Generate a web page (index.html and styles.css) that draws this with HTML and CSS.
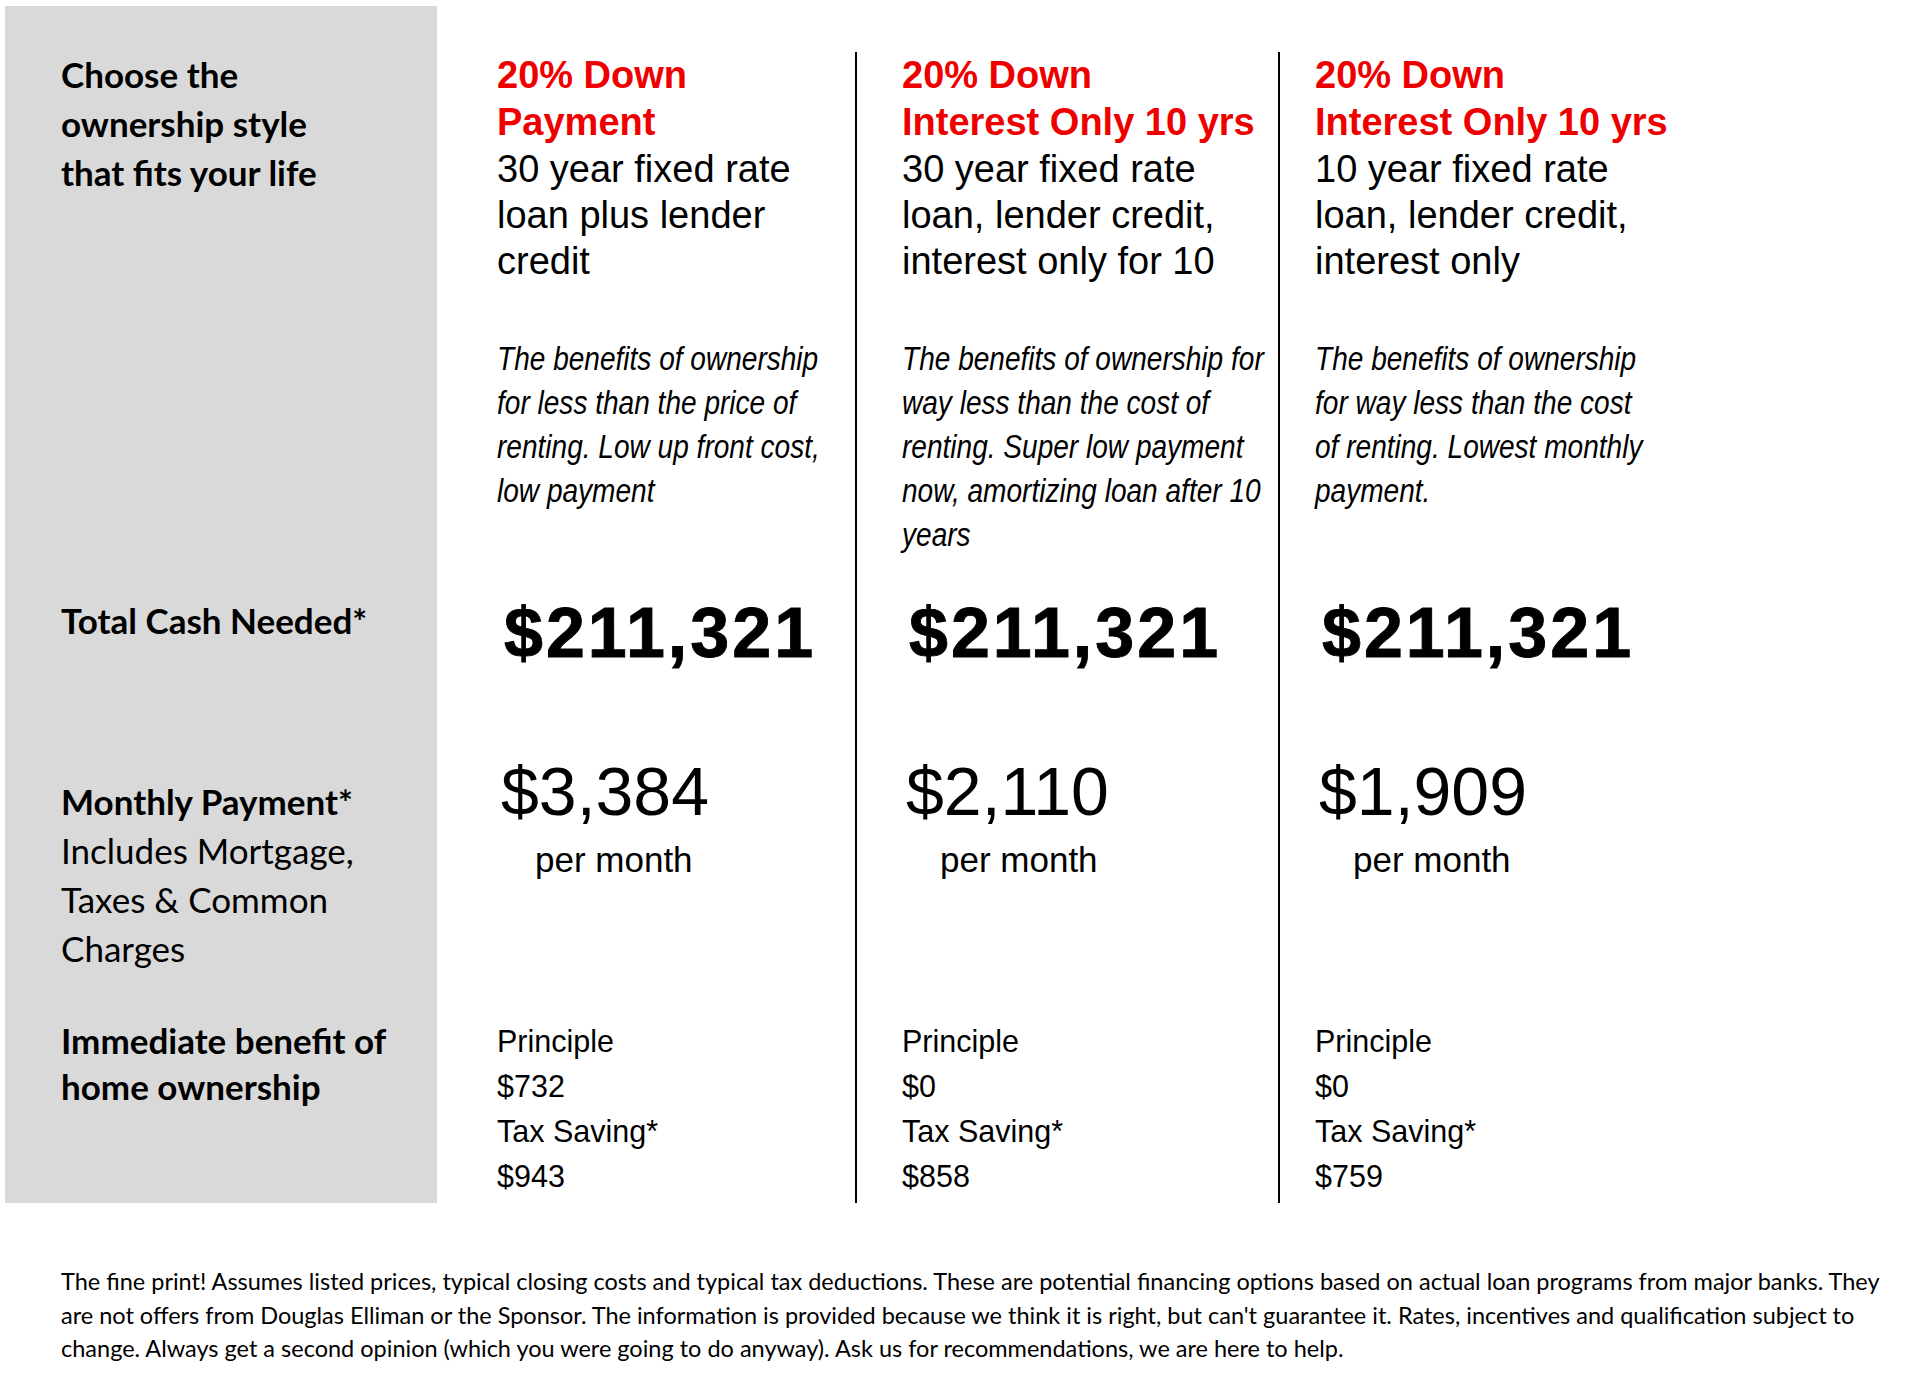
FILE: index.html
```html
<!DOCTYPE html>
<html lang="en">
<head>
<meta charset="utf-8">
<title>Ownership options</title>
<link rel="stylesheet" href="styles.css">
</head>
<body>
<div class="sheet">
  <div class="rule rule-a"></div>
  <div class="rule rule-b"></div>

  <div class="cell label c1 r1">Choose the<br>ownership style<br>that fits your life</div>
  <div class="cell c2 r1">
    <div class="plan-title">20% Down<br>Payment</div>
    <div class="plan-sub">30 year fixed rate<br>loan plus lender<br>credit</div>
    <div class="plan-desc">The benefits of ownership<br>for less than the price of<br>renting. Low up front cost,<br>low payment</div>
  </div>
  <div class="cell c3 r1">
    <div class="plan-title">20% Down<br>Interest Only 10 yrs</div>
    <div class="plan-sub">30 year fixed rate<br>loan, lender credit,<br>interest only for 10</div>
    <div class="plan-desc">The benefits of ownership for<br>way less than the cost of<br>renting. Super low payment<br>now, amortizing loan after 10<br>years</div>
  </div>
  <div class="cell c4 r1">
    <div class="plan-title">20% Down<br>Interest Only 10 yrs</div>
    <div class="plan-sub">10 year fixed rate<br>loan, lender credit,<br>interest only</div>
    <div class="plan-desc">The benefits of ownership<br>for way less than the cost<br>of renting. Lowest monthly<br>payment.</div>
  </div>

  <div class="cell label c1 r2">Total Cash Needed*</div>
  <div class="cell c2 r2"><div class="cash">$211,321</div></div>
  <div class="cell c3 r2"><div class="cash">$211,321</div></div>
  <div class="cell c4 r2"><div class="cash">$211,321</div></div>

  <div class="cell label c1 r3">Monthly Payment*<br><span class="note">Includes Mortgage,<br>Taxes &amp; Common<br>Charges</span></div>
  <div class="cell c2 r3"><div class="monthly">$3,384</div><div class="per">per month</div></div>
  <div class="cell c3 r3"><div class="monthly">$2,110</div><div class="per">per month</div></div>
  <div class="cell c4 r3"><div class="monthly">$1,909</div><div class="per">per month</div></div>

  <div class="cell label c1 r4">Immediate benefit of<br>home ownership</div>
  <div class="cell c2 r4"><div class="benefit">Principle<br>$732<br>Tax Saving*<br>$943</div></div>
  <div class="cell c3 r4"><div class="benefit">Principle<br>$0<br>Tax Saving*<br>$858</div></div>
  <div class="cell c4 r4"><div class="benefit">Principle<br>$0<br>Tax Saving*<br>$759</div></div>
</div>

<p class="fine-print">The fine print! Assumes listed prices, typical closing costs and typical tax deductions. These are potential financing options based on actual loan programs from major banks. They are not offers from Douglas Elliman or the Sponsor. The information is provided because we think it is right, but can't guarantee it. Rates, incentives and qualification subject to change. Always get a second opinion (which you were going to do anyway). Ask us for recommendations, we are here to help.</p>
</body>
</html>
```

FILE: styles.css
```css
html, body {
  margin: 0;
  padding: 0;
  background: #ffffff;
  color: #000000;
}

body {
  font-family: "Liberation Sans", Arial, sans-serif;
}

.sheet {
  display: grid;
  grid-template-columns: 432px 418px 423px 402px;
  grid-template-rows: 574px 160px 260px 203px;
  margin: 6px 0 0 5px;
}

.rule {
  grid-row: 1 / -1;
  justify-self: start;
  width: 2px;
  margin-top: 46px;
  background: #000;
  z-index: 1;
}
.rule-a { grid-column: 3; }
.rule-b { grid-column: 4; }

.cell { min-width: 0; }
.c1 { grid-column: 1; background: #d9d9d9; padding-left: 56px; }
.c2 { grid-column: 2; padding-left: 60px; }
.c3 { grid-column: 3; padding-left: 47px; }
.c4 { grid-column: 4; padding-left: 37px; }
.r1 { grid-row: 1; }
.r2 { grid-row: 2; }
.r3 { grid-row: 3; }
.r4 { grid-row: 4; }

.label {
  font-family: Lato, "Open Sans", sans-serif;
  font-weight: 700;
  font-size: 35px;
  line-height: 49px;
  white-space: nowrap;
}
.label.r1 { padding-top: 44px; }
.label.r2 { padding-top: 16px; }
.label.r3 { padding-top: 37px; }
.label.r4 { padding-top: 17px; line-height: 46px; }
.note { font-weight: 400; }

.plan-title {
  padding-top: 46px;
  color: #ee0000;
  font-weight: 700;
  font-size: 38px;
  line-height: 47px;
  white-space: nowrap;
}
.plan-sub {
  font-size: 38px;
  line-height: 46px;
  white-space: nowrap;
}
.plan-desc {
  margin-top: 53px;
  font-style: italic;
  font-size: 33px;
  line-height: 44px;
  white-space: nowrap;
  transform: scaleX(0.85);
  transform-origin: 0 0;
}

.cash {
  padding-top: 13px;
  margin-left: 7px;
  font-weight: 700;
  font-size: 70px;
  line-height: 80px;
  letter-spacing: 3px;
  -webkit-text-stroke: 0.9px #000;
}

.monthly {
  padding-top: 13px;
  margin-left: 4px;
  font-size: 68px;
  line-height: 76px;
}
.per {
  margin-top: 2px;
  margin-left: 38px;
  font-size: 35px;
  line-height: 57px;
}

.benefit {
  padding-top: 19px;
  font-size: 30.5px;
  line-height: 45px;
}

.fine-print {
  margin: 62px 0 0 61px;
  width: 1835px;
  font-family: Lato, "Open Sans", sans-serif;
  font-size: 23.5px;
  line-height: 33.5px;
}
```
